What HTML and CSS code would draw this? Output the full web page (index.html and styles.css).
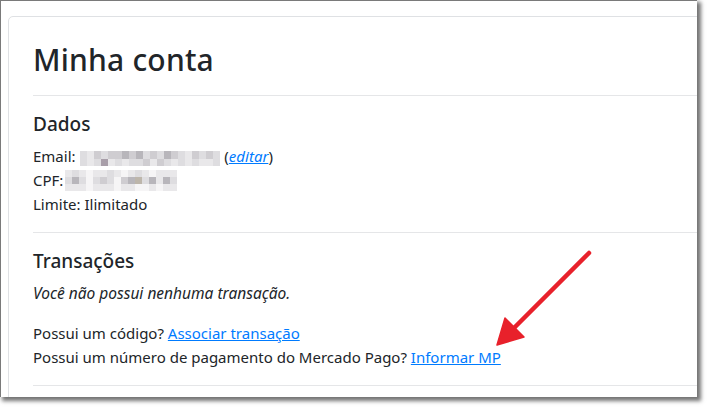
FILE: index.html
```html
<!DOCTYPE html>
<html lang="pt-BR">
<head>
<meta charset="utf-8">
<title>Minha conta</title>
<link rel="stylesheet" href="styles.css">
</head>
<body>
<div class="window">
  <div class="card">
    <h1 class="title">Minha conta</h1>
    <hr class="rule">
    <h5 class="section-title">Dados</h5>
    <p class="data">
      Email: <span class="blur blur-email"><span class="blur-grid grid-email">
        <i class="c2"></i><i class="c1"></i><i class="c3"></i><i class="c2"></i><i class="c3"></i><i class="c3"></i><i class="c4"></i><i class="c3"></i><i class="c4"></i><i class="c2"></i><i class="c3"></i><i class="c2"></i><i class="c4"></i><i class="c3"></i><i class="c2"></i><i class="c1"></i><i class="c3"></i><i class="c2"></i><i class="c3"></i><i class="c2"></i>
        <i class="c2"></i><i class="c1"></i><i class="c2"></i><i class="c5"></i><i class="c1"></i><i class="c2"></i><i class="c1"></i><i class="c2"></i><i class="c2"></i><i class="c3"></i><i class="c1"></i><i class="c3"></i><i class="c2"></i><i class="c1"></i><i class="c2"></i><i class="c1"></i><i class="c2"></i><i class="c1"></i><i class="c1"></i><i class="c2"></i>
      </span></span> (<a class="link italic" href="#">editar</a>)<br>
      CPF:<span class="blur blur-cpf"><span class="blur-grid grid-cpf">
        <i class="c1"></i><i class="c2"></i><i class="c1"></i><i class="c0"></i><i class="c1"></i><i class="c1"></i><i class="c2"></i><i class="c1"></i><i class="c0"></i><i class="c1"></i><i class="c2"></i><i class="c1"></i><i class="c0"></i><i class="c1"></i><i class="c1"></i><i class="c1"></i>
        <i class="c2"></i><i class="c4"></i><i class="c2"></i><i class="c0"></i><i class="c2"></i><i class="c3"></i><i class="c2"></i><i class="c0"></i><i class="c3"></i><i class="c4"></i><i class="c6"></i><i class="c2"></i><i class="c4"></i><i class="c1"></i><i class="c4"></i><i class="c2"></i>
        <i class="c1"></i><i class="c1"></i><i class="c1"></i><i class="c0"></i><i class="c1"></i><i class="c1"></i><i class="c1"></i><i class="c0"></i><i class="c1"></i><i class="c1"></i><i class="c0"></i><i class="c0"></i><i class="c1"></i><i class="c0"></i><i class="c1"></i><i class="c1"></i>
      </span></span><br>
      Limite: Ilimitado
    </p>
    <hr class="rule">
    <h5 class="section-title">Transações</h5>
    <p class="data italic note">Você não possui nenhuma transação.</p>
    <p class="data">
      Possui um código? <a class="link" href="#">Associar transação</a><br>
      Possui um número de pagamento do Mercado Pago? <a class="link" href="#">Informar MP</a>
    </p>
    <hr class="rule">
  </div>
  <svg class="arrow" width="708" height="409" viewBox="0 0 708 409" aria-hidden="true">
    <line x1="589" y1="253" x2="512" y2="330" stroke="#e8212b" stroke-width="4.5" stroke-linecap="round"/>
    <polygon points="497,345 505,318 524,337" fill="#e8212b" stroke="#e8212b" stroke-width="1.5" stroke-linejoin="round"/>
  </svg>
</div>
</body>
</html>
```

FILE: styles.css
```css
html, body {
  margin: 0;
  padding: 0;
  background: #ffffff;
}

body {
  width: 708px;
  height: 409px;
  overflow: hidden;
  font-family: "Noto Sans", "Open Sans", sans-serif;
  color: #212529;
}

.window {
  position: relative;
  width: 697px;
  height: 397px;
  border-top: 1px solid #7a7a7a;
  border-left: 1px solid #7a7a7a;
  background: #ffffff;
  overflow: hidden;
  box-shadow: 3px 3px 4px 1px rgba(0, 0, 0, 0.55);
  box-sizing: border-box;
}

.card {
  margin: 15px 0 0 7px;
  width: 820px;
  height: 420px;
  border: 1px solid #dfe1e4;
  border-radius: 5px;
  padding: 23px 24px 0 24px;
  box-sizing: border-box;
}

.title {
  margin: 0;
  font-size: 30px;
  line-height: 39px;
  font-weight: 500;
  letter-spacing: 0.2px;
}

.rule {
  margin: 16px 0;
  border: 0;
  border-top: 1px solid #e5e6e8;
}

.section-title {
  margin: 0 0 8px 0;
  font-size: 19px;
  line-height: 24px;
  font-weight: 500;
}

.data {
  margin: 0 0 16px 0;
  font-size: 15px;
  line-height: 24px;
}

.note {
  font-size: 15.5px;
}

.italic {
  font-style: italic;
}

.link {
  color: #007bff;
  text-decoration: underline;
}

.blur {
  display: inline-block;
  overflow: hidden;
  line-height: 0;
}

.blur-email {
  width: 140px;
  height: 15px;
  vertical-align: -4px;
  margin-left: 1px;
}

.blur-cpf {
  width: 112px;
  height: 21px;
  vertical-align: -5px;
  margin-left: 2px;
}

.blur-grid {
  display: grid;
}

.grid-email {
  grid-template-columns: repeat(20, 7px);
  grid-template-rows: 8px 7px;
}

.grid-cpf {
  grid-template-columns: repeat(16, 7px);
  grid-template-rows: 7px 7px 7px;
}

.blur i {
  display: block;
}

.c0 { background: #f6f5f6; }
.c1 { background: #e9e8ea; }
.c2 { background: #dedde0; }
.c3 { background: #cfcdd1; }
.c4 { background: #b8b6bb; }
.c5 { background: #a89ea9; }
.c6 { background: #bdb6ab; }

.arrow {
  position: absolute;
  left: -1px;
  top: -1px;
  pointer-events: none;
}
```
